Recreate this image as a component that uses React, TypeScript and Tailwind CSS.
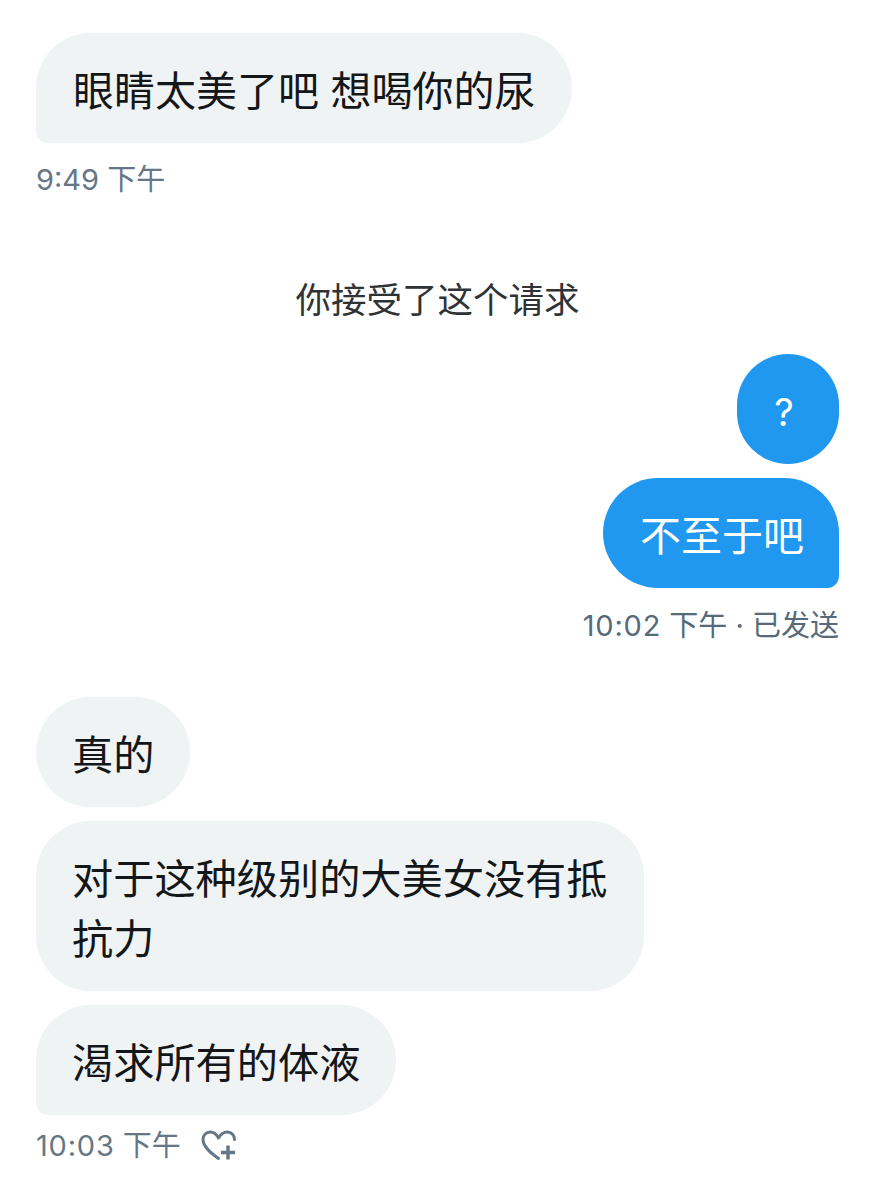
const FONT = "font-['Inter','Noto_Sans_CJK_SC',sans-serif]";

function Received({ children, className = "" }: { children: React.ReactNode; className?: string }) {
  return (
    <div className={`rounded-[55px] bg-[#eff3f4] pb-[22px] pr-[36px] pt-[28px] leading-[60px] text-[#14171a] ${className}`}>
      {children}
    </div>
  );
}

function Sent({ children, className = "" }: { children: React.ReactNode; className?: string }) {
  return (
    <div className={`rounded-[55px] bg-[#2098f0] pb-[22px] pt-[28px] leading-[60px] text-white ${className}`}>
      {children}
    </div>
  );
}

function HeartPlus() {
  return (
    <svg width="36" height="32" viewBox="0 0 36 32" fill="none" stroke="#657786" strokeWidth="3" strokeLinecap="round" strokeLinejoin="round">
      <path d="M17.500 28.500C10.500 23.500 2 17 2 9.500 2 5 5.500 2 9 2c3.700 0 6.500 2 8.500 6 2.200-4 5.300-6 9-6 3.500 0 7 3 7 7.500" />
      <path d="M27 15.500v14M20 22.500H34" strokeWidth="3.500" strokeLinecap="butt" />
    </svg>
  );
}

export default function App() {
  return (
    <div className={`h-[1200px] w-[875px] overflow-hidden bg-white px-[36px] pt-[33px] ${FONT}`}>
      <div className="flex">
        <Received className="rounded-bl-[12px] pl-[37px] text-[41px]">眼睛太美了吧 想喝你的尿</Received>
      </div>
      <div className="mt-[18px] text-[29px] leading-[38px] text-[#657786]">9:49 下午</div>

      <div className="mt-[77px] text-center text-[35.500px] leading-[50px] text-[#2f3336]">你接受了这个请求</div>

      <div className="mt-[28px] flex flex-col items-end">
        <div className="flex flex-col items-end gap-[14px]">
          <Sent className="flex w-[102px] justify-center pr-[8px] text-[38px]">?</Sent>
          <Sent className="rounded-br-[12px] pl-[37px] pr-[35px] text-[41px]">不至于吧</Sent>
        </div>
        <div className="mt-[19px] text-[29px] leading-[38px] text-[#566a7a]">
          <span className="tracking-[0.800px]">10:02</span> 下午 · 已发送
        </div>
      </div>

      <div className="mt-[52px] flex flex-col items-start gap-[14px] text-[41.200px]">
        <Received className="pl-[36px]">真的</Received>
        <Received className="w-[608px] pl-[36px]">对于这种级别的大美女没有抵抗力</Received>
        <Received className="rounded-bl-[12px] pl-[36px]">渴求所有的体液</Received>
      </div>
      <div className="mt-[12px] flex items-center gap-[20px] text-[29px] leading-[38px] text-[#657786]">
        <span>
          <span className="tracking-[0.800px]">10:03</span> 下午
        </span>
        <HeartPlus />
      </div>
    </div>
  );
}
